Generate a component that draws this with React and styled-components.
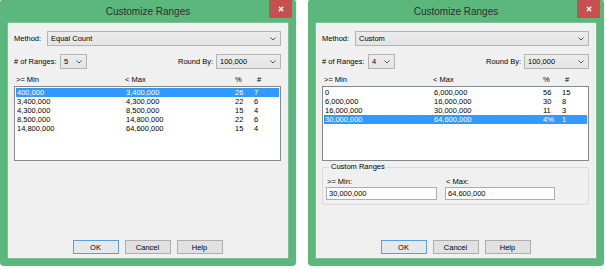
import React from 'react'
import styled, { createGlobalStyle } from 'styled-components'

const Global = createGlobalStyle`
  body {
    margin: 0;
    background: #ffffff;
    font-family: "Liberation Sans", Arial, sans-serif;
  }
`
const Page = styled.div`
  display: flex;
  gap: 12px;
  width: 605px;
  height: 269px;
  overflow: hidden;
`
const Window = styled.div`
  width: 296px;
  height: 266px;
  flex-shrink: 0;
  background: #5cb77c;
  border-radius: 2px 2px 4px 4px;
  display: flex;
  flex-direction: column;
`
const TitleBar = styled.div`
  height: 22px;
  display: grid;
  grid-template-columns: 1fr auto 1fr;
  align-items: start;
`
const Title = styled.div`
  grid-column: 2;
  font-size: 10px;
  line-height: 23px;
  color: #2f2f2f;
`
const Close = styled.div`
  grid-column: 3;
  justify-self: end;
  margin-right: 4px;
  width: 23px;
  height: 18px;
  background: #c7504f;
  display: flex;
  align-items: center;
  justify-content: center;
`
const Client = styled.div`
  flex: 1;
  margin: 0 7px 7px;
  background: #f0f0f0;
  border: 1px solid #7cbf92;
  padding: 8px 7px 4px 6px;
  display: flex;
  flex-direction: column;
  font-size: 7.5px;
  color: #000;
`
const FieldRow = styled.div`
  display: flex;
  align-items: center;
  height: 15px;
  margin-top: ${p => p.$top || 0}px;
`
const Label = styled.span`
  width: ${p => (p.$w ? `${p.$w}px` : 'auto')};
  margin-right: ${p => p.$mr || 0}px;
  white-space: nowrap;
`
const Spacer = styled.div`
  flex: 1;
`
const Select = styled.div`
  height: 15px;
  box-sizing: border-box;
  width: ${p => (p.$w ? `${p.$w}px` : 'auto')};
  flex: ${p => (p.$w ? 'none' : 1)};
  border: 1px solid #b3b3b3;
  background: linear-gradient(#ececec, #e4e4e4);
  display: flex;
  align-items: center;
  padding: 0 4px 0 3px;
  span {
    flex: 1;
  }
`
const Header = styled.div`
  display: grid;
  grid-template-columns: 109px 110px 22px 1fr;
  padding-left: 2px;
  margin-top: 6px;
  height: 10px;
  line-height: 10px;
`
const List = styled.div`
  margin-top: 1px;
  height: 75px;
  box-sizing: border-box;
  background: #fff;
  border: 1px solid #828790;
  padding: 1px;
`
const Row = styled.div`
  display: grid;
  grid-template-columns: 109px 109px 19px 1fr;
  height: 9px;
  line-height: 9px;
  padding-left: 1px;
  background: ${p => (p.$selected ? '#3399ff' : 'transparent')};
  color: ${p => (p.$selected ? '#fff' : '#000')};
`
const Group = styled.fieldset`
  margin: 1px 0 0;
  padding: 0 3px 4px;
  border: 1px solid #dadada;
  border-radius: 2px;
  display: grid;
  grid-template-columns: 111px 110px;
  column-gap: 8px;
  legend {
    padding: 0 2px;
    margin-left: 3px;
    line-height: 10px;
  }
`
const Cell = styled.div`
  display: flex;
  flex-direction: column;
  label {
    height: 10px;
    line-height: 10px;
    margin: 5px 0 0 1px;
  }
`
const Input = styled.div`
  height: 13px;
  box-sizing: border-box;
  border: 1px solid #abadb3;
  background: #fff;
  padding-left: 2px;
  line-height: 11px;
`
const Buttons = styled.div`
  margin-top: auto;
  display: flex;
  justify-content: center;
  gap: 6px;
`
const Button = styled.div`
  width: 46px;
  height: 14px;
  box-sizing: border-box;
  border: 1px solid ${p => (p.$default ? '#5a9fdc' : '#adadad')};
  background: ${p => (p.$default ? '#e6e9ec' : '#e1e1e1')};
  display: flex;
  align-items: center;
  justify-content: center;
`

const Chevron = () => (
  <svg width="6" height="4" viewBox="0 0 6 4">
    <polyline points="0.5,0.5 3,3 5.5,0.5" fill="none" stroke="#555" strokeWidth="1" />
  </svg>
)

const CloseIcon = () => (
  <svg width="6" height="6" viewBox="0 0 6 6">
    <path d="M0.8 0.8L5.2 5.2M5.2 0.8L0.8 5.2" stroke="#fff" strokeWidth="1.4" />
  </svg>
)

function Dialog({ method, count, rows, custom }) {
  return (
    <Window>
      <TitleBar>
        <Title>Customize Ranges</Title>
        <Close><CloseIcon /></Close>
      </TitleBar>
      <Client>
        <FieldRow>
          <Label $w={33}>Method:</Label>
          <Select><span>{method}</span><Chevron /></Select>
        </FieldRow>
        <FieldRow $top={8}>
          <Label $w={46}># of Ranges:</Label>
          <Select $w={27}><span>{count}</span><Chevron /></Select>
          <Spacer />
          <Label $mr={3}>Round By:</Label>
          <Select $w={65}><span>100,000</span><Chevron /></Select>
        </FieldRow>
        <Header>
          <span>&gt;= Min</span>
          <span>&lt; Max</span>
          <span>%</span>
          <span>#</span>
        </Header>
        <List>
          {rows.map((r, i) => (
            <Row key={i} $selected={r.sel}>
              <span>{r.min}</span>
              <span>{r.max}</span>
              <span>{r.pct}</span>
              <span>{r.n}</span>
            </Row>
          ))}
        </List>
        {custom && (
          <Group>
            <legend>Custom Ranges</legend>
            <Cell>
              <label>&gt;= Min:</label>
              <Input>{custom.min}</Input>
            </Cell>
            <Cell>
              <label>&lt; Max:</label>
              <Input>{custom.max}</Input>
            </Cell>
          </Group>
        )}
        <Buttons>
          <Button $default>OK</Button>
          <Button>Cancel</Button>
          <Button>Help</Button>
        </Buttons>
      </Client>
    </Window>
  )
}

const equalRows = [
  { min: '400,000', max: '3,400,000', pct: '26', n: '7', sel: true },
  { min: '3,400,000', max: '4,300,000', pct: '22', n: '6' },
  { min: '4,300,000', max: '8,500,000', pct: '15', n: '4' },
  { min: '8,500,000', max: '14,800,000', pct: '22', n: '6' },
  { min: '14,800,000', max: '64,600,000', pct: '15', n: '4' },
]

const customRows = [
  { min: '0', max: '6,000,000', pct: '56', n: '15' },
  { min: '6,000,000', max: '16,000,000', pct: '30', n: '8' },
  { min: '16,000,000', max: '30,000,000', pct: '11', n: '3' },
  { min: '30,000,000', max: '64,600,000', pct: '4%', n: '1', sel: true },
]

export default function App() {
  return (
    <>
      <Global />
      <Page>
        <Dialog method="Equal Count" count="5" rows={equalRows} />
        <Dialog
          method="Custom"
          count="4"
          rows={customRows}
          custom={{ min: '30,000,000', max: '64,600,000' }}
        />
      </Page>
    </>
  )
}
